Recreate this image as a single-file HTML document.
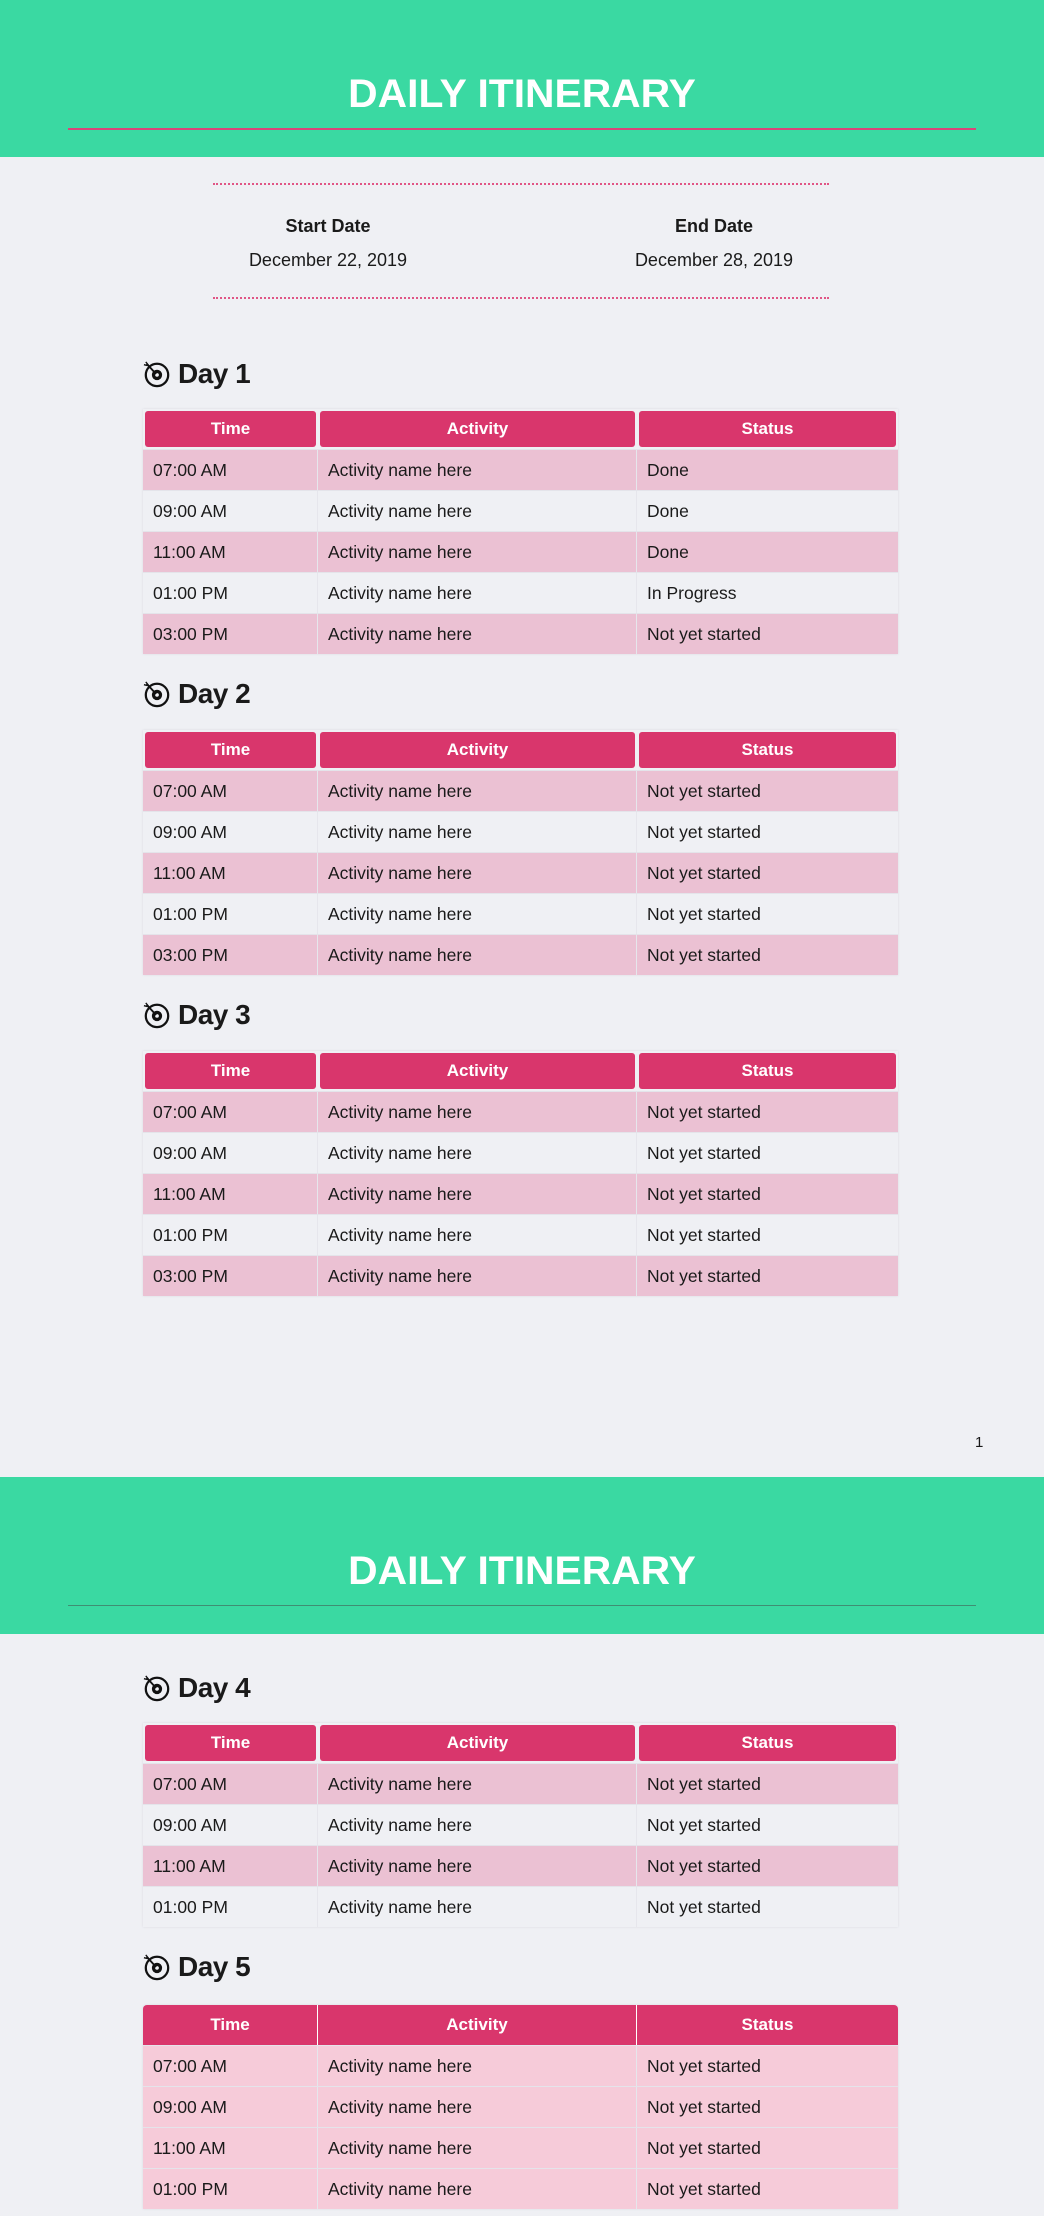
<!DOCTYPE html>
<html><head><meta charset="utf-8"><style>
*{margin:0;padding:0;box-sizing:border-box}
body{width:1044px;height:2216px;background:#eff0f4;font-family:"Liberation Sans",sans-serif;position:relative;overflow:hidden;color:#1a1a1a}
.hdr{position:absolute;left:0;width:1044px;height:157px;background:#3ad9a2}
.hdr h1{position:absolute;left:0;width:1044px;top:72px;text-align:center;color:#fff;font-size:40px;font-weight:bold;letter-spacing:0px;transform:scaleX(1.02)}
.hdr .ln{position:absolute;left:68px;width:908px;top:128px;height:2px;background:#d9467a}
.dot{position:absolute;left:213px;width:616px;border-top:2px dotted #e05585}
.lbl{position:absolute;width:300px;text-align:center;font-size:18px}
.day{position:absolute;left:143px;height:36px;display:flex;align-items:center}
.day span{font-size:28px;font-weight:bold;margin-left:7px;letter-spacing:-0.5px}
.tb{position:absolute;left:143px;width:755px;box-shadow:0 0 2px #d8d8e0}
.hr{display:flex;height:40px;padding:2px 0 2px 0}
.hr div{background:#d9366c;color:#fff;font-weight:bold;font-size:17px;display:flex;align-items:center;justify-content:center;border-radius:3px;margin:0 2px}
.r{display:flex;height:41px;border-top:1px solid #e4e4ea}
.r div{display:flex;align-items:center;padding-left:10px;font-size:17.5px;border-right:1px solid #e6e6ec}
.r div:last-child{border-right:none}
.p{background:#ebc1d3}.w{background:#eff0f4}.q{background:#f6cbd9}
.c1{width:175px}.c2{width:319px}.c3{width:261px}
.h1{width:171px}.h2{width:315px}.h3{width:257px}
.t5 .hr{padding:0}.t5 .hr div{margin:0;border-radius:0;border-right:1px solid #fff}
.t5 .hr div:last-child{border-right:none}
.t5{border-radius:4px 4px 0 0;overflow:hidden}
</style></head><body>

<div class="hdr" style="top:0"><h1>DAILY ITINERARY</h1><div class="ln"></div></div>
<div class="dot" style="top:183px"></div>
<div class="lbl" style="left:178px;top:216px;font-weight:bold">Start Date</div>
<div class="lbl" style="left:178px;top:250px">December 22, 2019</div>
<div class="lbl" style="left:564px;top:216px;font-weight:bold">End Date</div>
<div class="lbl" style="left:564px;top:250px">December 28, 2019</div>
<div class="dot" style="top:297px"></div>

<svg width="0" height="0" style="position:absolute"><defs><symbol id="ic" viewBox="0 0 30 30"><circle cx="15" cy="16" r="12" fill="none" stroke="#111" stroke-width="2.4"/><circle cx="15" cy="16" r="5.5" fill="#111"/><circle cx="15" cy="16" r="2" fill="#eff0f4"/><path d="M4 4 L14 15" stroke="#111" stroke-width="2"/><path d="M3 2 L6 6 M1 5 L5 6" stroke="#111" stroke-width="1.5"/></symbol></defs></svg>

<div class="day" style="top:356px"><svg width="28" height="30"><use href="#ic"/></svg><span>Day 1</span></div>
<div class="tb" style="top:409px">
<div class="hr"><div class="h1">Time</div><div class="h2">Activity</div><div class="h3">Status</div></div>
<div class="r p"><div class="c1">07:00 AM</div><div class="c2">Activity name here</div><div class="c3">Done</div></div>
<div class="r w"><div class="c1">09:00 AM</div><div class="c2">Activity name here</div><div class="c3">Done</div></div>
<div class="r p"><div class="c1">11:00 AM</div><div class="c2">Activity name here</div><div class="c3">Done</div></div>
<div class="r w"><div class="c1">01:00 PM</div><div class="c2">Activity name here</div><div class="c3">In Progress</div></div>
<div class="r p"><div class="c1">03:00 PM</div><div class="c2">Activity name here</div><div class="c3">Not yet started</div></div>
</div>

<div class="day" style="top:676px"><svg width="28" height="30"><use href="#ic"/></svg><span>Day 2</span></div>
<div class="tb" style="top:730px">
<div class="hr"><div class="h1">Time</div><div class="h2">Activity</div><div class="h3">Status</div></div>
<div class="r p"><div class="c1">07:00 AM</div><div class="c2">Activity name here</div><div class="c3">Not yet started</div></div>
<div class="r w"><div class="c1">09:00 AM</div><div class="c2">Activity name here</div><div class="c3">Not yet started</div></div>
<div class="r p"><div class="c1">11:00 AM</div><div class="c2">Activity name here</div><div class="c3">Not yet started</div></div>
<div class="r w"><div class="c1">01:00 PM</div><div class="c2">Activity name here</div><div class="c3">Not yet started</div></div>
<div class="r p"><div class="c1">03:00 PM</div><div class="c2">Activity name here</div><div class="c3">Not yet started</div></div>
</div>

<div class="day" style="top:997px"><svg width="28" height="30"><use href="#ic"/></svg><span>Day 3</span></div>
<div class="tb" style="top:1051px">
<div class="hr"><div class="h1">Time</div><div class="h2">Activity</div><div class="h3">Status</div></div>
<div class="r p"><div class="c1">07:00 AM</div><div class="c2">Activity name here</div><div class="c3">Not yet started</div></div>
<div class="r w"><div class="c1">09:00 AM</div><div class="c2">Activity name here</div><div class="c3">Not yet started</div></div>
<div class="r p"><div class="c1">11:00 AM</div><div class="c2">Activity name here</div><div class="c3">Not yet started</div></div>
<div class="r w"><div class="c1">01:00 PM</div><div class="c2">Activity name here</div><div class="c3">Not yet started</div></div>
<div class="r p"><div class="c1">03:00 PM</div><div class="c2">Activity name here</div><div class="c3">Not yet started</div></div>
</div>

<div style="position:absolute;left:975px;top:1434px;font-size:15px">1</div>

<div class="hdr" style="top:1477px"><h1>DAILY ITINERARY</h1><div class="ln" style="background:#3f8f73;height:1px"></div></div>

<div class="day" style="top:1670px"><svg width="28" height="30"><use href="#ic"/></svg><span>Day 4</span></div>
<div class="tb" style="top:1723px">
<div class="hr"><div class="h1">Time</div><div class="h2">Activity</div><div class="h3">Status</div></div>
<div class="r p"><div class="c1">07:00 AM</div><div class="c2">Activity name here</div><div class="c3">Not yet started</div></div>
<div class="r w"><div class="c1">09:00 AM</div><div class="c2">Activity name here</div><div class="c3">Not yet started</div></div>
<div class="r p"><div class="c1">11:00 AM</div><div class="c2">Activity name here</div><div class="c3">Not yet started</div></div>
<div class="r w"><div class="c1">01:00 PM</div><div class="c2">Activity name here</div><div class="c3">Not yet started</div></div>
</div>

<div class="day" style="top:1949px"><svg width="28" height="30"><use href="#ic"/></svg><span>Day 5</span></div>
<div class="tb t5" style="top:2005px">
<div class="hr"><div class="c1">Time</div><div class="c2">Activity</div><div class="c3">Status</div></div>
<div class="r q"><div class="c1">07:00 AM</div><div class="c2">Activity name here</div><div class="c3">Not yet started</div></div>
<div class="r q"><div class="c1">09:00 AM</div><div class="c2">Activity name here</div><div class="c3">Not yet started</div></div>
<div class="r q"><div class="c1">11:00 AM</div><div class="c2">Activity name here</div><div class="c3">Not yet started</div></div>
<div class="r q"><div class="c1">01:00 PM</div><div class="c2">Activity name here</div><div class="c3">Not yet started</div></div>
</div>
</body></html>
